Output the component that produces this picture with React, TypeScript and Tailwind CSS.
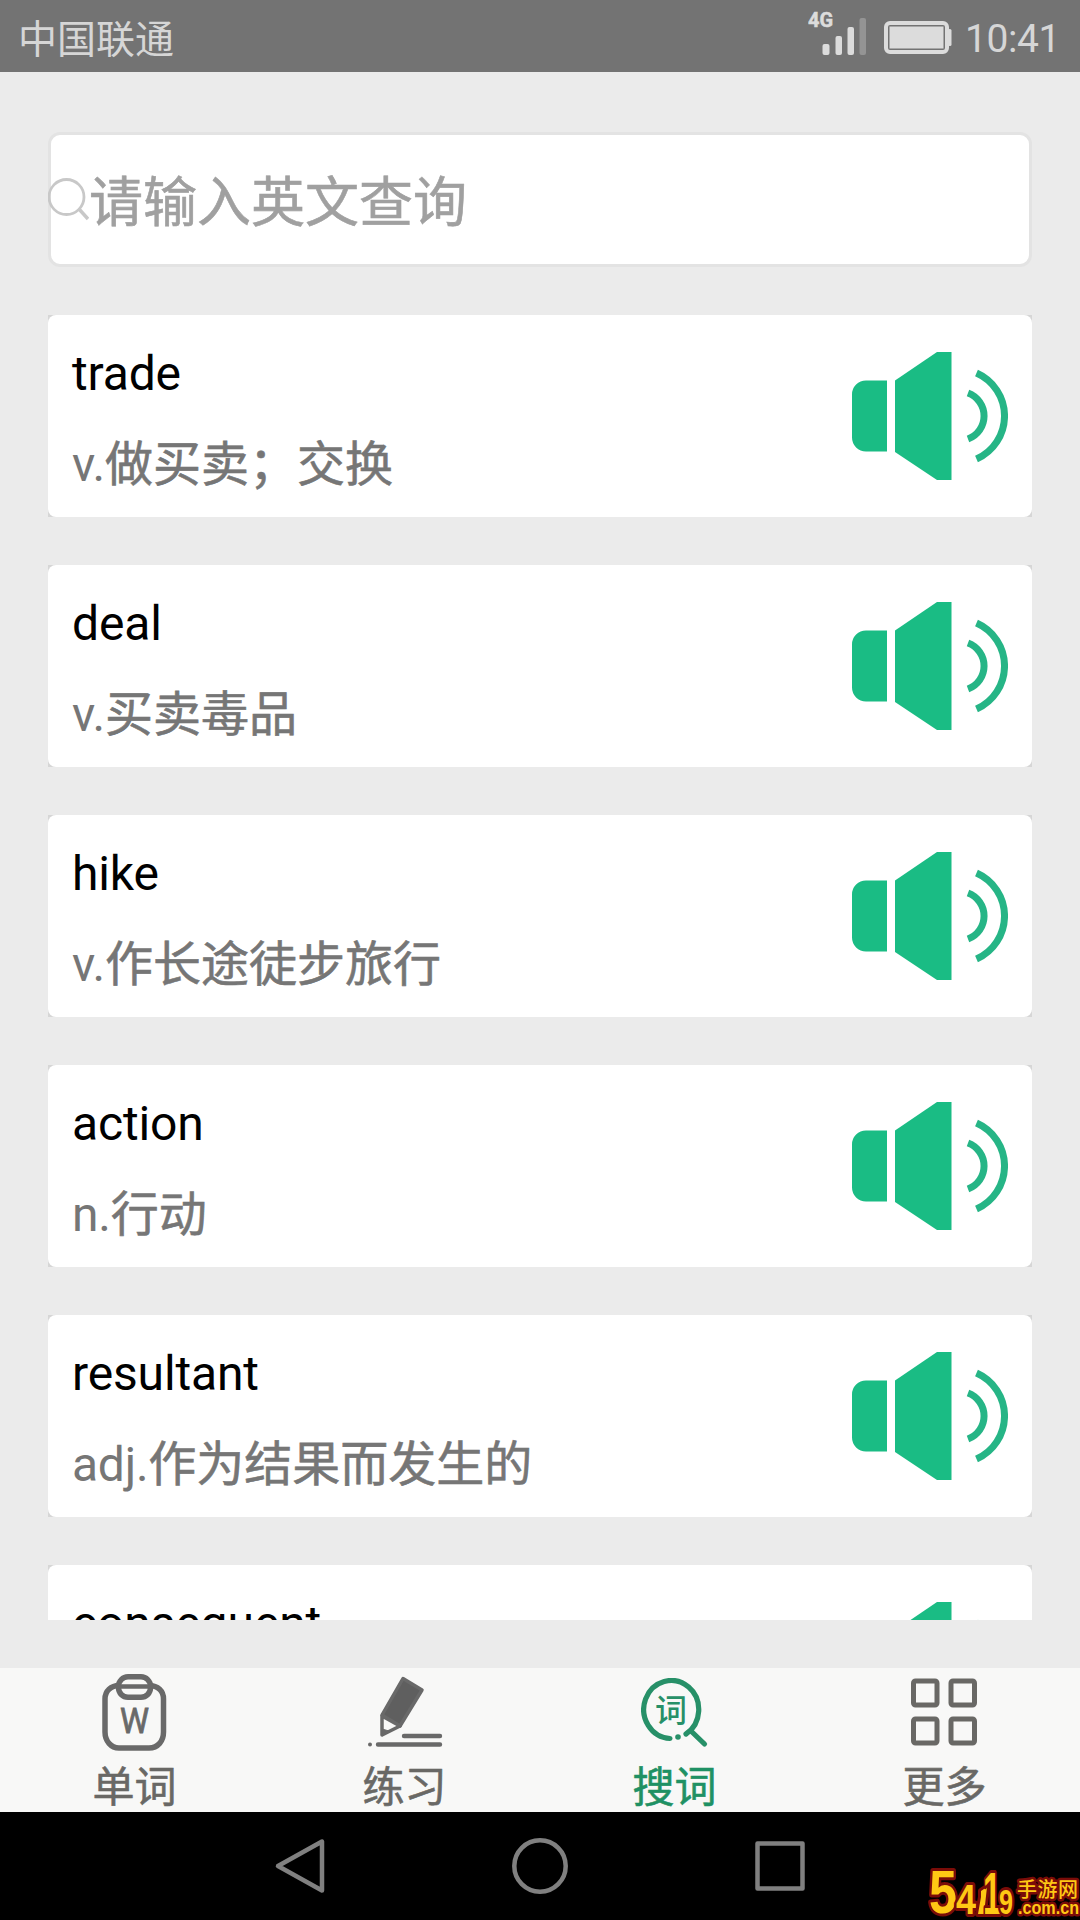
import { useState } from "react";

interface WordEntry {
  word: string;
  pos: string;
  meaning: string;
}

const WORDS: WordEntry[] = [
  { word: "trade", pos: "v.", meaning: "做买卖；交换" },
  { word: "deal", pos: "v.", meaning: "买卖毒品" },
  { word: "hike", pos: "v.", meaning: "作长途徒步旅行" },
  { word: "action", pos: "n.", meaning: "行动" },
  { word: "resultant", pos: "adj.", meaning: "作为结果而发生的" },
  { word: "consequent", pos: "", meaning: "" },
];

function SpeakerIcon() {
  return (
    <svg width="156" height="128" viewBox="0 0 156 128" fill="#1abc84">
      <path d="M14 28.5H35V99.5H14A14 14 0 0 1 0 85.5V42.5A14 14 0 0 1 14 28.5Z" />
      <path d="M43 28.5L85 0H99.5V128H85L43 100Z" />
      <g fill="none" stroke="#26b586" strokeWidth="7">
        <path d="M116 41A24.5 24.5 0 0 1 116 87" />
        <path d="M124.500 21A47 47 0 0 1 124.500 107" />
      </g>
    </svg>
  );
}

function WordCard({ word, pos, meaning }: WordEntry) {
  return (
    <div className="shrink-0 bg-[#d6d6d6]">
      <div className="flex h-[202px] items-center justify-between rounded-lg bg-white px-6">
        <div className="flex flex-col pt-1.5 text-[48px] leading-[56px]">
          <span className="h-[91px] tracking-[-0.15px] text-black">{word}</span>
          <span className="h-[55px] text-[#767676]">
            <span className="tracking-[-0.25px]">{pos}</span>
            <span className="[-webkit-text-stroke:0.6px_#767676]">{meaning}</span>
          </span>
        </div>
        <button>
          <SpeakerIcon />
        </button>
      </div>
    </div>
  );
}

// Icônes des onglets
function ClipboardIcon() {
  return (
    <svg width="66" height="78" viewBox="0 0 66 78" fill="none" stroke="#696969" strokeWidth="5.500">
      <path d="M17 11.500C9 11.500 3 17 3 25V58C3 67 9 74 17 74H47C56 74 61.500 67 61.500 58V25C61.500 17 56 11.500 47 11.500" />
      <rect x="16.500" y="2.800" width="32" height="20.500" rx="9.500" />
      <path d="M16 12.500H48" strokeWidth="4.500" />
      <text x="18" y="59" fontSize="35" textLength="29" lengthAdjust="spacingAndGlyphs" fill="#696969" stroke="#696969" strokeWidth="0.800" fontFamily="Roboto">W</text>
    </svg>
  );
}

function PencilIcon() {
  return (
    <svg width="76" height="78" viewBox="0 0 76 78" fill="none" stroke="#696969">
      <path d="M36 4.500L55 16L33 52L15 41Z" fill="#5f5f5f" strokeWidth="3.500" strokeLinejoin="round" />
      <path d="M15 42V61L33 52Z" fill="#f8f8f7" strokeWidth="3.500" strokeLinejoin="round" />
      <path d="M15 55L22 57L15 62Z" fill="#696969" strokeWidth="1" />
      <path d="M37 62H73M11 70.500H73" strokeWidth="4.400" strokeLinecap="round" />
      <circle cx="3" cy="70.500" r="2" fill="#696969" stroke="none" />
    </svg>
  );
}

function SearchWordIcon() {
  return (
    <svg width="68" height="70" viewBox="0 0 68 70" fill="none" stroke="#279068" strokeWidth="5.200" strokeLinecap="round">
      <path d="M29 60.500A27.500 29 0 1 1 45 56" />
      <path d="M50 53L63.500 66" />
      <circle cx="37" cy="59" r="2.800" fill="#279068" stroke="none" />
      <text x="30" y="43.500" textAnchor="middle" fontSize="32" fill="#279068" stroke="none" fontFamily="Noto Sans CJK SC" fontWeight="500">词</text>
    </svg>
  );
}

function GridIcon() {
  return (
    <svg width="68" height="70" viewBox="0 0 68 70" fill="none" stroke="#696865" strokeWidth="5">
      <rect x="2.500" y="3" width="23.500" height="24" rx="2" />
      <rect x="40" y="3" width="23.500" height="24" rx="2" />
      <rect x="2.500" y="41" width="23.500" height="24" rx="2" />
      <rect x="40" y="41" width="23.500" height="24" rx="2" />
    </svg>
  );
}

const TABS = [
  { label: "单词", icon: <ClipboardIcon /> },
  { label: "练习", icon: <PencilIcon /> },
  { label: "搜词", icon: <SearchWordIcon /> },
  { label: "更多", icon: <GridIcon /> },
];

function StatusBar() {
  return (
    <header className="flex h-[72px] shrink-0 items-center justify-between bg-[#737373] pl-[18px] pr-[20px] text-[#d6d6d6]">
      <span className="pt-2 text-[39px] leading-[56px]">中国联通</span>
      <div className="flex items-center">
        <svg width="145" height="72" viewBox="0 0 145 72" fill="#dcdcdc">
          <text x="0" y="27" fontSize="20" fontWeight="700" fontFamily="Roboto" stroke="#dcdcdc" strokeWidth="0.500">4G</text>
          <rect x="14.500" y="44" width="7" height="11" rx="2" />
          <rect x="27.500" y="36" width="6.500" height="19" rx="2" />
          <rect x="39.500" y="27" width="6.500" height="28" rx="2" />
          <rect x="51.500" y="18" width="6.500" height="37" rx="2" fill="#949494" />
          <rect x="78" y="23" width="61" height="29" rx="4" fill="none" stroke="#dcdcdc" strokeWidth="4" />
          <rect x="81.500" y="26.500" width="54" height="22" />
          <rect x="140" y="29" width="3.500" height="17" rx="1.500" />
        </svg>
        <span className="pl-3 pt-1.5 text-[39px] leading-[56px] tracking-[-0.4px]">10:41</span>
      </div>
    </header>
  );
}

export default function App() {
  const [active, setActive] = useState(2);
  const [query, setQuery] = useState("");

  return (
    <div className="flex h-[1920px] w-[1080px] flex-col overflow-hidden bg-[#ebebeb] font-['Roboto','Noto_Sans_CJK_SC',sans-serif]">
      <StatusBar />

      {/* Recherche */}
      <div className="px-12 pt-[60px]">
        <label className="flex h-[135px] items-center rounded-xl border-[3px] border-[#e3e3e3] bg-white">
          <svg className="-ml-[3px] shrink-0" width="41" height="44" viewBox="0 0 41 44" fill="none" stroke="#c8c8c8" strokeWidth="2.800">
            <circle cx="18.500" cy="19" r="17.500" />
            <path d="M31 31L40 41" strokeWidth="3.500" />
          </svg>
          <input
            value={query}
            onChange={(e) => setQuery(e.target.value)}
            placeholder="请输入英文查询"
            className="h-full flex-1 pt-2 text-[54px] outline-none placeholder:text-[#a0a0a0] placeholder:[-webkit-text-stroke:0.6px_#a0a0a0]"
          />
        </label>
      </div>

      {/* Liste des mots */}
      <main className="mx-12 my-12 flex min-h-0 flex-1 flex-col gap-12 overflow-hidden">
        {WORDS.map((w) => (
          <WordCard key={w.word} {...w} />
        ))}
      </main>

      {/* Onglets */}
      <nav className="grid h-[144px] shrink-0 grid-cols-4 bg-[#f8f8f7]">
        {TABS.map((tab, i) => (
          <button key={tab.label} onClick={() => setActive(i)} className="flex flex-col items-center">
            <span className="flex h-[90px] items-center justify-center">{tab.icon}</span>
            <span
              className={`pt-[3px] pr-px text-[42px] leading-[54px] [-webkit-text-stroke:0.6px_currentColor] ${
                i === active ? "text-[#1f9164]" : "text-[#696865]"
              }`}
            >
              {tab.label}
            </span>
          </button>
        ))}
      </nav>

      {/* Barre système */}
      <footer className="relative flex h-[108px] shrink-0 items-center justify-center gap-[184px] bg-black">
        <svg width="56" height="60" viewBox="0 0 56 60" fill="none" stroke="#808080" strokeWidth="4.500" strokeLinejoin="round">
          <path d="M6 30L50 5.500V54.500Z" />
        </svg>
        <svg width="56" height="56" viewBox="0 0 56 56" fill="none" stroke="#808080" strokeWidth="4.500">
          <circle cx="28" cy="28" r="25.700" />
        </svg>
        <svg width="56" height="56" viewBox="0 0 56 56" fill="none" stroke="#808080" strokeWidth="4.500" strokeLinejoin="round">
          <rect x="5.500" y="5.500" width="45" height="45" />
        </svg>
        <svg
          className="absolute bottom-0 right-0"
          width="155"
          height="60"
          viewBox="0 0 155 60"
          fill="#ffc814"
          stroke="#7a0c08"
          strokeWidth="6"
          strokeLinejoin="round"
          paintOrder="stroke"
          fontFamily="Liberation Sans"
          fontWeight="700"
        >
          <text x="4" y="53" fontSize="62" textLength="28" lengthAdjust="spacingAndGlyphs">5</text>
          <text x="31" y="54" fontSize="42" textLength="20" lengthAdjust="spacingAndGlyphs">4</text>
          <path d="M56 31L62 27L59 54H53L56 37Z" />
          <text x="58" y="54" fontSize="60" textLength="18" lengthAdjust="spacingAndGlyphs">1</text>
          <text x="74" y="54" fontSize="35" textLength="14" lengthAdjust="spacingAndGlyphs">9</text>
          <text x="92" y="37" fontSize="20" strokeWidth="5" textLength="61" fontFamily="Noto Sans CJK SC" fontWeight="500">手游网</text>
          <text x="93" y="54" fontSize="19" strokeWidth="5" textLength="61" lengthAdjust="spacingAndGlyphs">.com.cn</text>
        </svg>
      </footer>
    </div>
  );
}
